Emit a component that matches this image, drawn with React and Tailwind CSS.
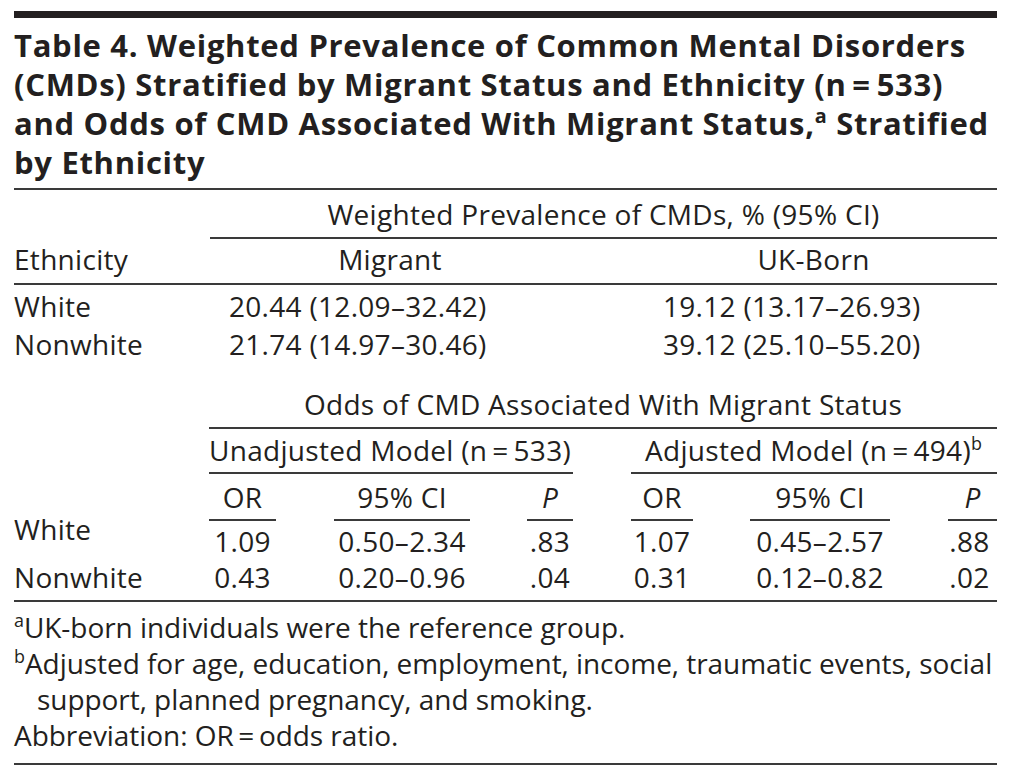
import React from "react";

const ink = "text-[#231f20]";

const prevalence = [
  { group: "White", migrant: "20.44 (12.09–32.42)", ukBorn: "19.12 (13.17–26.93)" },
  { group: "Nonwhite", migrant: "21.74 (14.97–30.46)", ukBorn: "39.12 (25.10–55.20)" },
];

const odds = [
  { group: "White", u: ["1.09", "0.50–2.34", ".83"], a: ["1.07", "0.45–2.57", ".88"] },
  { group: "Nonwhite", u: ["0.43", "0.20–0.96", ".04"], a: ["0.31", "0.12–0.82", ".02"] },
];

const Sup = ({ children }) => (
  <sup className="text-[0.64em] relative -top-[0.62em]">{children}</sup>
);

const SubHead = ({ children }) => (
  <div className="border-b-2 border-[#3a3a3a] pt-[8px] pb-[7px] text-center">{children}</div>
);

export default function App() {
  return (
    <div
      className={`w-[1011px] h-[772px] bg-white px-[14px] pt-[11px] font-['Open_Sans','Noto_Sans',sans-serif] ${ink}`}
    >
      <div className="h-[7px] bg-[#231f20]" />

      {/* title */}
      <h1 className="mt-[8px] mb-[6px] text-[31px] leading-[39px] font-bold whitespace-nowrap tracking-[0.7px]">
        Table 4. Weighted Prevalence of Common Mental Disorders
        <br />
        (CMDs) Stratified by Migrant Status and Ethnicity (n{"\u2009"}={"\u2009"}533)
        <br />
        and Odds of CMD Associated With Migrant Status,<Sup>a</Sup> Stratified
        <br />
        by Ethnicity
      </h1>

      <div className="border-t-2 border-[#3a3a3a]" />

      {/* prevalence */}
      <div className="grid grid-cols-[196px_360px_60px_367px] text-[28px] leading-[30px] tracking-[0.3px] whitespace-nowrap">
        <div />
        <div className="col-span-3 border-b-2 border-[#3a3a3a] pt-[9px] pb-[8px] text-center">
          Weighted Prevalence of CMDs, % (95% CI)
        </div>

        <div className="col-span-4 grid grid-cols-[196px_360px_60px_367px] border-b-2 border-[#3a3a3a] pt-[5px] pb-[9px]">
          <div>Ethnicity</div>
          <div className="text-center">Migrant</div>
          <div />
          <div className="text-center">UK-Born</div>
        </div>

        <div className="col-span-4 pt-[2px]">
          {prevalence.map((r) => (
            <div key={r.group} className="grid grid-cols-[196px_360px_60px_367px] leading-[38px]">
              <div>{r.group}</div>
              <div className="pl-[19px]">{r.migrant}</div>
              <div />
              <div className="pl-[33px]">{r.ukBorn}</div>
            </div>
          ))}
        </div>
      </div>

      {/* odds */}
      <div className="mt-[26px] grid grid-cols-[195px_67px_58px_136px_57px_46px_58px_62px_57px_140px_58px_49px] text-[28px] leading-[30px] tracking-[0.3px] whitespace-nowrap">
        <div />
        <div className="col-span-11 border-b-2 border-[#3a3a3a] pb-[8px] text-center">
          Odds of CMD Associated With Migrant Status
        </div>

        <div />
        <div className="col-span-5 border-b-2 border-[#3a3a3a] pt-[6px] pb-[7px]">
          Unadjusted Model (n{"\u2009"}={"\u2009"}533)
        </div>
        <div />
        <div className="col-span-5 border-b-2 border-[#3a3a3a] pt-[6px] pb-[7px] pl-[14px]">
          Adjusted Model (n{"\u2009"}={"\u2009"}494)<Sup>b</Sup>
        </div>

        <div className="row-span-2 self-end mb-[12px]">{odds[0].group}</div>
        <SubHead>OR</SubHead>
        <div />
        <SubHead>95% CI</SubHead>
        <div />
        <SubHead>
          <i>P</i>
        </SubHead>
        <div />
        <SubHead>OR</SubHead>
        <div />
        <SubHead>95% CI</SubHead>
        <div />
        <SubHead>
          <i>P</i>
        </SubHead>

        {odds.map((r, i) => {
          const pad = i === 0 ? "pt-[5px]" : "pt-[6px] pb-[8px]";
          return (
            <React.Fragment key={r.group}>
              {i > 0 && <div className={pad}>{r.group}</div>}
              <div className={`text-center ${pad}`}>{r.u[0]}</div>
              <div />
              <div className={`text-center ${pad}`}>{r.u[1]}</div>
              <div />
              <div className={`text-center ${pad}`}>{r.u[2]}</div>
              <div />
              <div className={`text-center ${pad}`}>{r.a[0]}</div>
              <div />
              <div className={`text-center ${pad}`}>{r.a[1]}</div>
              <div />
              <div className={`text-center pr-[6px] ${pad}`}>{r.a[2]}</div>
            </React.Fragment>
          );
        })}
      </div>

      <div className="border-t-2 border-[#3a3a3a]" />

      {/* footnotes */}
      <div className="pt-[7px] text-[28px] leading-[36px] tracking-[-0.05px] whitespace-nowrap">
        <p>
          <Sup>a</Sup>UK-born individuals were the reference group.
        </p>
        <p className="pl-[23px] -indent-[23px]">
          <Sup>b</Sup>Adjusted for age, education, employment, income, traumatic events, social
          <br />
          support, planned pregnancy, and smoking.
        </p>
        <p>Abbreviation: OR{"\u2009"}={"\u2009"}odds ratio.</p>
      </div>

      <div className="mt-[10px] border-t-2 border-[#3a3a3a]" />
    </div>
  );
}
